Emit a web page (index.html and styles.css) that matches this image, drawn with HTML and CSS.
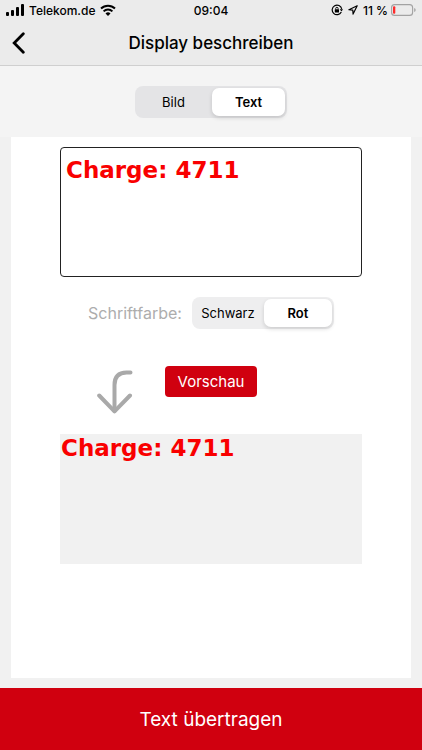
FILE: index.html
```
<!DOCTYPE html>
<html lang="de">
<head>
    <meta charset="UTF-8">
    <meta name="viewport" content="width=device-width, initial-scale=1">
    <title>Display beschreiben</title>
    <link rel="stylesheet" href="styles.css">
</head>
<body>
    <header class="header">
        <div class="status-bar">
            <div class="status-left">
                <svg width="18" height="12" viewBox="0 0 18 12" aria-hidden="true">
                    <rect x="0" y="8" width="3" height="4" rx="1"/>
                    <rect x="5" y="6" width="3" height="6" rx="1"/>
                    <rect x="10" y="3" width="3" height="9" rx="1"/>
                    <rect x="15" y="0" width="3" height="12" rx="1"/>
                </svg>
                <span>Telekom.de</span>
                <svg width="16" height="12" viewBox="0 0 16 12" fill="none" stroke="#000" stroke-width="2" aria-hidden="true">
                    <path d="M1 4.5a10 10 0 0 1 14 0"/>
                    <path d="M3.6 7.4a6.2 6.2 0 0 1 8.8 0"/>
                    <path d="M8 12L5.5 9.4a3.6 3.6 0 0 1 5 0z" fill="#000" stroke="none"/>
                </svg>
            </div>
            <time class="clock">09:04</time>
            <div class="status-right">
                <svg width="12" height="12" viewBox="0 0 12 12" fill="none" stroke="#000" aria-hidden="true">
                    <path d="M10.3 8a4.8 4.8 0 1 1 .4-3.1" stroke-width="1.2"/>
                    <path d="M8.7 5.2h3.3l-1.5 2.4z" fill="#000" stroke="none"/>
                    <rect x="3.8" y="5.3" width="4.2" height="3.2" rx=".5" fill="#000" stroke="none"/>
                    <path d="M4.7 5.5v-1a1.2 1.2 0 0 1 2.4 0v1" stroke-width=".9"/>
                </svg>
                <svg width="10" height="10" viewBox="0 0 10 10" fill="none" stroke="#000" stroke-width="1.2" stroke-linejoin="round" aria-hidden="true">
                    <path d="M9.2.8L.9 4.7l3.9.5.3 3.9z"/>
                </svg>
                <span>11 %</span>
                <svg class="battery" width="25" height="12" viewBox="0 0 25 12" aria-hidden="true">
                    <rect x=".6" y=".6" width="21" height="10.8" rx="3" fill="none" stroke="#a2a2a2" stroke-width="1.1"/>
                    <rect x="2" y="2.3" width="2.3" height="7.4" rx="1" fill="#ff2b2b"/>
                    <path d="M23.2 4v4q1.5-.7 1.5-2t-1.5-2z" fill="#a2a2a2"/>
                </svg>
            </div>
        </div>
        <div class="nav-bar">
            <button class="back" type="button" aria-label="Zurück">
                <svg width="13" height="22" viewBox="0 0 13 22" fill="none" stroke="#000" stroke-width="2.8" stroke-linecap="round" aria-hidden="true">
                    <path d="M11.3 1.8L2.2 11l9.1 9.2"/>
                </svg>
            </button>
            <h1>Display beschreiben</h1>
        </div>
    </header>

    <main class="content">
        <div class="mode">
            <div class="segmented" role="radiogroup" aria-label="Modus">
                <label class="segment segment-wide">
                    <input type="radio" name="mode" value="bild">
                    <span>Bild</span>
                </label>
                <label class="segment segment-wide">
                    <input type="radio" name="mode" value="text" checked>
                    <span>Text</span>
                </label>
            </div>
        </div>

        <section class="card">
            <textarea class="display-text" id="display-text" aria-label="Text" spellcheck="false">Charge: 4711</textarea>

            <div class="color-row">
                <span class="color-label" id="color-label">Schriftfarbe:</span>
                <div class="segmented segmented-light" role="radiogroup" aria-labelledby="color-label">
                    <label class="segment">
                        <input type="radio" name="color" value="schwarz">
                        <span>Schwarz</span>
                    </label>
                    <label class="segment">
                        <input type="radio" name="color" value="rot" checked>
                        <span>Rot</span>
                    </label>
                </div>
            </div>

            <div class="preview-row">
                <svg class="arrow" width="36" height="44" viewBox="0 0 36 44" fill="none" stroke="#a9a9a9" stroke-width="4" stroke-linecap="round" stroke-linejoin="round" aria-hidden="true">
                    <path d="M33.500 2.500h-4C21.500 2.500 17.500 6.500 17.500 15v26"/>
                    <path d="M2.200 25.500l15.300 15.800L33 25.500"/>
                </svg>
                <button class="preview-button" type="button">Vorschau</button>
            </div>

            <output class="preview" for="display-text">Charge: 4711</output>
        </section>
    </main>

    <button class="transfer" type="button">Text übertragen</button>
</body>
</html>
```
FILE: styles.css
```
* {
    box-sizing: border-box;
}

body {
    margin: 0;
    min-height: 100vh;
    display: flex;
    flex-direction: column;
    background-color: #f1f1f1;
    color: #000;
    font-family: Inter, "Liberation Sans", sans-serif;
}

button {
    border: 0;
    font-family: inherit;
    cursor: pointer;
}

svg {
    display: block;
    flex: none;
}

.header {
    background-color: #ebebeb;
    border-bottom: 1px solid #cfcfcf;
}

.status-bar {
    display: grid;
    grid-template-columns: 1fr auto 1fr;
    align-items: center;
    height: 20px;
    padding: 0 6px;
    font-size: 12px;
    font-weight: 500;
}

.status-left,
.status-right {
    display: flex;
    align-items: center;
    gap: 5px;
}

.status-right {
    justify-content: flex-end;
}

.battery {
    margin-left: -2px;
}

.nav-bar {
    display: grid;
    grid-template-columns: 32px 1fr 32px;
    align-items: center;
    height: 45px;
    padding: 0 8px;
}

.back {
    padding: 4px;
    background: none;
}

.nav-bar h1 {
    margin: 0;
    text-align: center;
    font-size: 17px;
    font-weight: 500;
}

.content {
    flex: 1;
    display: flex;
    flex-direction: column;
    padding-bottom: 10px;
}

.mode {
    display: flex;
    justify-content: center;
    padding: 20px 0 19px;
    background-color: #f4f4f4;
}

.segmented {
    display: flex;
    gap: 2px;
    padding: 2px;
    border-radius: 8px;
    background-color: #e4e4e6;
}

.segmented-light {
    background-color: #eeeeef;
}

.segment {
    cursor: pointer;
}

.segment input {
    position: absolute;
    opacity: 0;
}

.segment span {
    display: block;
    min-width: 68px;
    border-radius: 7px;
    text-align: center;
    font-size: 13px;
    font-weight: 400;
    line-height: 28px;
}

.segment-wide span {
    min-width: 73px;
}

.segment input:checked + span {
    background-color: #fff;
    font-weight: 600;
    box-shadow: 0 2px 4px rgba(0, 0, 0, 0.14);
}

.segment input:focus-visible + span {
    outline: 2px solid #d0000f;
}

.card {
    flex: 1;
    margin: 0 11px;
    padding: 10px 49px;
    background-color: #fff;
}

/* text as it appears on the device display */
.display-text,
.preview {
    display: block;
    width: 100%;
    height: 130px;
    color: #f90000;
    font-family: "DejaVu Sans", sans-serif;
    font-size: 23px;
    font-weight: 700;
    line-height: 28px;
}

.display-text {
    padding: 8px 5px;
    border: 1px solid #222;
    border-radius: 4px;
    background-color: #fff;
    outline: none;
    resize: none;
}

.color-row {
    display: flex;
    justify-content: center;
    align-items: center;
    gap: 10px;
    margin-top: 20px;
}

.color-label {
    color: #adadad;
    font-size: 16px;
}

.preview-row {
    display: grid;
    grid-template-columns: 1fr auto 1fr;
    margin-top: 37px;
}

.arrow {
    justify-self: end;
    margin: 4px 32px 0 0;
}

.preview-button {
    height: 31px;
    padding: 0 13px;
    border-radius: 4px;
    background-color: #d0000f;
    color: #fff;
    font-size: 15px;
}

.preview {
    margin-top: 20px;
    padding: 0 1px;
    background-color: #f1f1f1;
}

.transfer {
    height: 62px;
    background-color: #d0000f;
    color: #fff;
    font-size: 19px;
}
```
